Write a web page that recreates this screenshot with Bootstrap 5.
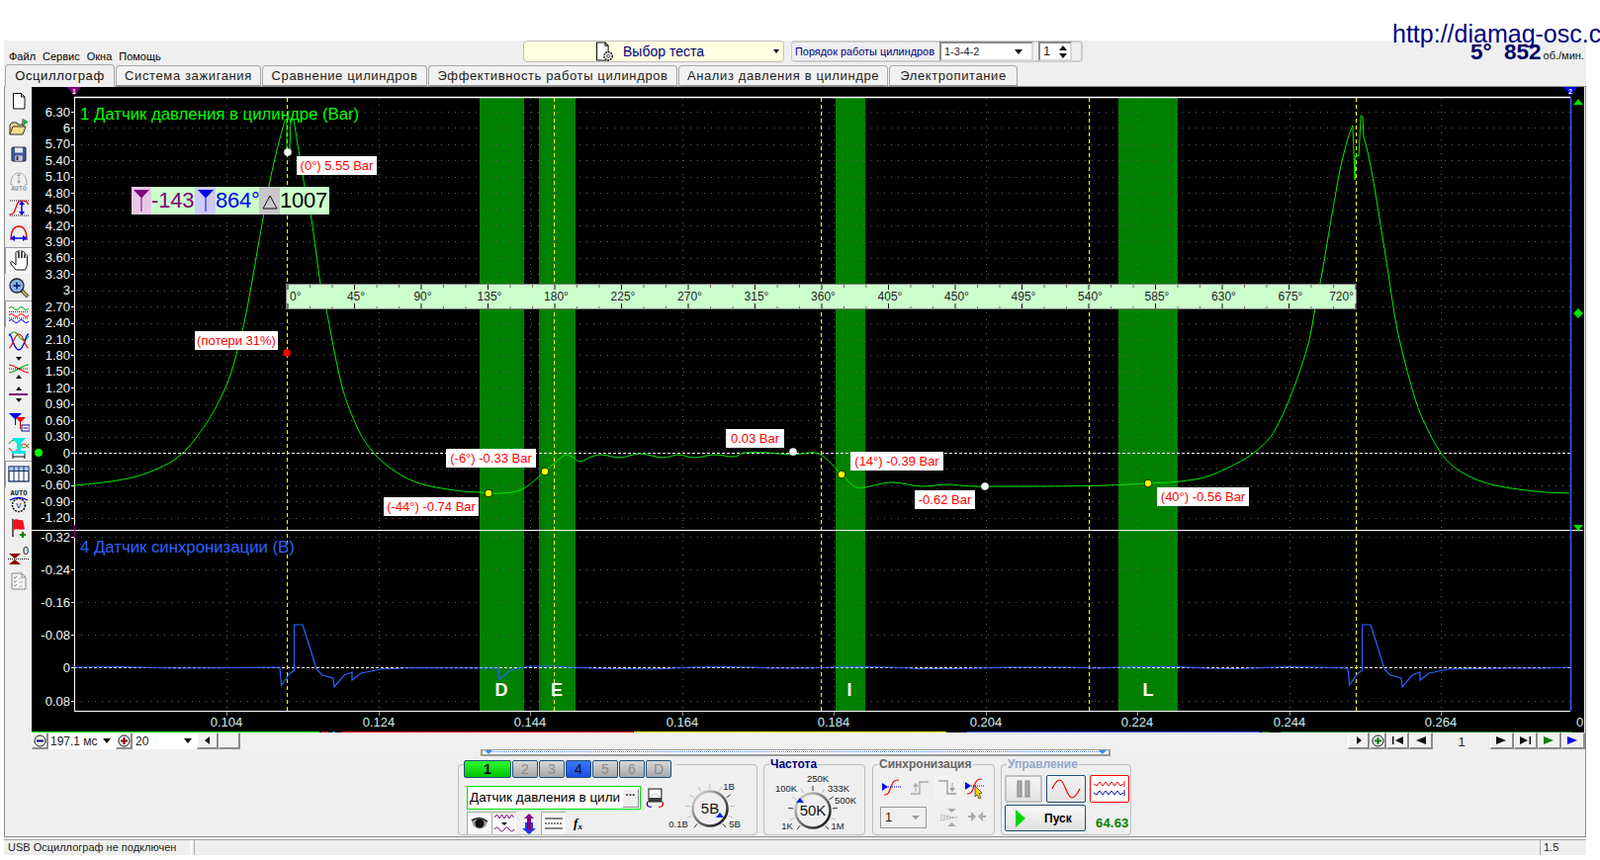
<!DOCTYPE html>
<html lang="ru">
<head>
  <meta charset="UTF-8">
  <title>Диамаг Осциллограф</title>
  <link href="https://cdn.jsdelivr.net/npm/bootstrap@5.3.0/dist/css/bootstrap.min.css" rel="stylesheet">
  <style>
    html, body { overflow: hidden; }
    body { background: #fff; font-family: "Liberation Sans", Arial, sans-serif; font-size: 11px; color: #000; width: 1618px; height: 870px; position: relative; }
    .top-strip { height: 41px; }
    .site-url { position: absolute; left: 1408px; top: 19px; font-size: 25px; line-height: 30px; color: #000080; white-space: nowrap; }
    .rpm-read { position: absolute; left: 1487px; top: 40px; color: #000066; font-weight: 700; font-size: 22.5px; line-height: 26px; white-space: nowrap; }
    .rpm-read span { font-weight: 400; font-size: 11px; color: #111; margin-left: 2px; }
    .app-wrap { width: 1600px; margin-left: 4px; background: #efefef; }

    .menu-row { height: 25px; }
    .menu-list { width: 525px; padding: 8px 0 0 5px; gap: 7px; }
    .test-pick { width: 264px; height: 22px; background: #ffffe1; border: 1px solid #c0c0c0; border-radius: 4px; color: #000080; font-size: 14px; line-height: 22px; padding-left: 70px; }
    .test-pick .drop-mark { margin-left: auto; margin-right: 4px; border-left-width: 3px; border-right-width: 3px; border-top-width: 4px; }
    .drop-mark { width: 0; height: 0; border-left: 4px solid transparent; border-right: 4px solid transparent; border-top: 5px solid #111; }
    .order-box { width: 295px; height: 22px; margin-left: 7px; border: 2px solid #ccc; border-left-width: 1px; border-radius: 4px; color: #000080; font-size: 10.9px; padding-left: 3px; gap: 5px; }
    .sunk-field { height: 20px; background: #fff; border: 2px solid #8a8a8a; border-right-color: #d8d8d8; border-bottom-color: #d8d8d8; color: #222; padding: 0 3px; }
    .order-combo { width: 95px; font-size: 11px; }
    .order-combo .drop-mark { margin-left: auto; margin-right: 6px; }
    .order-spin { width: 34px; font-size: 13px; }
    .spin-arrows { margin-left: auto; gap: 3px; }
    .spin-up, .spin-down { width: 0; height: 0; border-left: 4px solid transparent; border-right: 4px solid transparent; }
    .spin-up { border-bottom: 5px solid #111; }
    .spin-down { border-top: 5px solid #111; }

    .app-tabs.nav-tabs { height: 22px; padding-left: 1px; border-bottom: 1px solid #8f8f8f; flex-wrap: nowrap; gap: 1px; align-items: flex-end; }
    .app-tabs .nav-link { height: 21px; line-height: 20px; padding: 0; font-size: 13px; letter-spacing: .62px; color: #222; background: #f2f2f2; border: 1px solid #a8a8a8; border-bottom-color: #8f8f8f; border-radius: 4px 4px 0 0; margin: 0; text-align: center; white-space: nowrap; }
    .app-tabs .nav-link.active { height: 23px; margin-bottom: -1px; line-height: 22px; background: #efefef; color: #111; border-color: #a8a8a8 #a8a8a8 #efefef; }
    .tab-w1 { width: 111px; } .tab-w2 { width: 147px; } .tab-w3 { width: 167px; } .tab-w4 { width: 252px; } .tab-w5 { width: 212px; } .tab-w6 { width: 130px; }

    .work-frame { border: solid #8c8c8c; border-width: 0 1px 1px 1px; height: 759px; }
    .side-tools { width: 27px; height: 653px; }
    .side-btn { height: 27px; width: 27px; display: flex; align-items: center; justify-content: center; }
    .side-btn svg { display: block; }
    .side-btn.held { background: repeating-conic-gradient(#f4f4f4 0 25%, #fbfbfb 0 50%) 0 0 / 2px 2px; border-top: 1px solid #9a9a9a; border-left: 1px solid #9a9a9a; }
    .plot-area { position: relative; width: 1570px; height: 653px; background: #000; overflow: hidden; }
    .plot-area > svg { position: absolute; left: 0; top: 0; }
    .plot-tag { position: absolute; background: #fff; color: #f00; font-size: 13px; line-height: 19px; height: 19px; white-space: nowrap; text-align: center; }
    .chan-title { position: absolute; font-size: 16.75px; line-height: 20px; white-space: nowrap; }
    .chan-one { left: 49px; top: 18px; color: #00ff00; }
    .chan-four { left: 49px; top: 456px; color: #2f62ff; }
    .angle-box { position: absolute; left: 101px; top: 101px; height: 28px; display: flex; align-items: center; font-size: 22px; line-height: 28px; background: #ccffcc; border-radius: 1px; letter-spacing: -.2px; }
    .angle-box svg { display: block; }
    .seg-pin { width: 21px; height: 28px; display: flex; align-items: center; justify-content: center; }
    .seg-purple { background: #e6c8e6; width: 20px; } .seg-blue { background: #ccccff; } .seg-grey { background: #c8c8c8; }
    .seg-num { width: 44px; white-space: nowrap; }
    .seg-last { width: 50px; }
    .num-purple { color: #800080; } .num-blue { color: #0000ee; }
    .band-mark { position: absolute; color: #fff; font-weight: 700; font-size: 18px; line-height: 20px; width: 24px; text-align: center; }

    .scroll-row { height: 17px; padding-left: 27px; }
    .raise-btn { height: 17px; background: #f1f1f1; border: 1px solid; border-color: #fff #8c8c8c #8c8c8c #fff; border-width: 1px 2px 2px 1px; display: flex; align-items: center; justify-content: center; padding: 0; }
    .w-17 { width: 17px; } .w-22 { width: 22px; } .w-23 { width: 23px; } .w-24 { width: 24px; }
    .white-cell { height: 17px; background: #fff; font-size: 12px; color: #222; white-space: nowrap; }
    .white-cell .drop-mark { margin-left: auto; margin-right: 5px; }
    .cell-time { width: 68px; padding-left: 2px; }
    .cell-step { width: 65px; padding-left: 3px; }
    .check-track { flex: 1; height: 17px; background: repeating-conic-gradient(#e6e6e6 0 25%, #fafafa 0 50%) 0 0 / 2px 2px; }
    .frame-count { width: 58px; text-align: center; font-size: 13px; color: #222; }

    .slide-strip { width: 637px; height: 7px; margin-left: 481px; border: 2px solid #9a9a9a; border-width: 1px 2px 2px 2px; background: #fff; position: relative; }
    .slide-strip::before { content: ""; position: absolute; left: 8px; right: 8px; top: 1px; border-top: 1px dotted #3a7cf0; }
    .slide-strip i { position: absolute; top: 0; border-left: 4px solid transparent; border-right: 4px solid transparent; border-top: 4px solid #3a8cf0; }
    .slide-strip .end-l { left: 2px; } .slide-strip .end-r { right: 2px; }

    .bottom-groups { height: 81px; padding-left: 458px; align-items: flex-end; }
    fieldset.group-box { border: 1px solid #bdbdbd; border-radius: 4px; padding: 0; margin: 0 0 1px; min-width: 0; }
    fieldset.group-box legend { float: none; width: auto; margin: 0 0 0 5px; padding: 0 1px; font-size: 12px; line-height: 14px; height: 14px; font-weight: 700; }
    .box-chan { width: 303px; height: 76px; }
    fieldset.box-chan legend { height: 8px; line-height: 8px; margin-left: 5px; padding: 0 4px 0 0; }
    .box-freq { width: 103px; height: 79px; margin-left: 6px !important; }
    .box-sync { width: 124px; height: 79px; margin-left: 7px !important; }
    .box-ctrl { width: 132px; height: 79px; margin-left: 6px !important; }
    .lg-navy { color: #000080; } .lg-grey { color: #666; } .lg-soft { color: #8fa8cc; }

    .ch-btn.btn { width: 26px; height: 18px; padding: 0; margin-right: 1px; border-radius: 2px; border: 1px solid #1f4e79; font-size: 14px; line-height: 16px; color: #8a8a8a; background: linear-gradient(#d8d8d8, #a8a8a8); vertical-align: top; font-weight: 400; }
    .ch-btn.ch-on { width: 48px; color: #000; font-weight: 700; background: linear-gradient(#30ff30, #00c000); margin-right: 1px; }
    .ch-btn.ch-blue { color: #111; background: linear-gradient(#3a78ff, #1c4fe0); }
    .chan-left { width: 209px; padding: 18px 0 0 8px; }
    .chan-name { width: 177px; height: 24px; border: 1px solid #00e000; background: #fff; font-size: 13.5px; white-space: nowrap; overflow: hidden; padding-left: 2px; }
    .dots-btn { width: 17px; height: 19px; background: #eee; border: 1px solid; border-color: #fff #888 #888 #fff; font-size: 10px; line-height: 12px; font-weight: 700; text-align: center; margin-left: auto; margin-right: 1px; }
    .chan-icons { margin-top: 2px; }
    .small-tool { width: 25px; height: 23px; display: flex; align-items: center; justify-content: center; }
    .small-tool.held { background: #f8f8f8; border-top: 1px solid #aaa; border-left: 1px solid #aaa; }
    .fx-mark { font: italic 700 13px "Liberation Serif", serif; }
    .fx-mark sub { font-size: 9px; }
    .dial-slot { overflow: visible; flex: none; }
    .dial-volt { margin: 11px 0 0 3px; }
    .dial-freq { margin-top: 5px; }
    .sync-tool { width: 28px; height: 24px; display: flex; align-items: center; justify-content: center; }
    .sync-tool.held { background: repeating-conic-gradient(#eaeaea 0 25%, #fafafa 0 50%) 0 0 / 2px 2px; }
    .sync-top { padding: 5px 0 0 5px; }
    .sync-bottom { padding: 6px 0 0 7px; }
    .sync-combo { width: 47px; height: 22px; border: 1px solid #999; font-size: 13px; padding-left: 4px; color: #222; margin-right: 9px; }
    .sync-combo i { margin-left: auto; margin-right: 6px; width: 0; height: 0; border-left: 4px solid transparent; border-right: 4px solid transparent; border-top: 4px solid #999; }
    .ctrl-inner { padding: 4px 0 0 3px; }
    .ctrl-run-row { margin-top: 2px; }
    .ctrl-btn.btn { height: 28px; width: 40px; padding: 0; border-radius: 2px; display: flex; align-items: center; justify-content: center; background: linear-gradient(#f4f4f4, #e2e2e2); }
    .ctrl-pause.btn { width: 38px; border: 2px solid #c2c2c2; }
    .ctrl-sine.btn { border: 1px solid #1f4e79; }
    .ctrl-multi.btn { border: 1px solid #f00; background: #fff; }
    .run-btn.btn { width: 82px; height: 27px; padding: 0 0 0 9px; border: 1px solid #1f4e79; border-radius: 2px; background: linear-gradient(#fafafa, #e0e0e0); font-size: 12px; font-weight: 700; color: #000; display: flex; align-items: center; }
    .run-btn span { margin-left: 18px; }
    .run-rate { color: #008000; font-weight: 700; font-size: 13px; letter-spacing: .2px; margin-left: 10px; margin-top: 9px; }

    .status-row { height: 16px; margin-top: 2px; border-top: 1px solid #a8a8a8; font-size: 11px; line-height: 15px; color: #222; }
    .st-a { width: 190px; padding-left: 4px; border-right: 2px solid #fff; }
    .st-b { flex: 1; border-left: 1px solid #a8a8a8; margin-left: 2px; }
    .st-c { width: 47px; padding-left: 3px; border-left: 1px solid #a8a8a8; }
  </style>
</head>
<body>
  <div class="top-strip"></div>
  <div class="site-url">http://diamag-osc.c</div>
  <div class="rpm-read">5°&nbsp; 852<span>об./мин.</span></div>

  <div class="app-wrap">
    <!-- menu and test selector -->
    <div class="menu-row d-flex align-items-start">
      <div class="menu-list d-flex"><span>Файл</span><span>Сервис</span><span>Окна</span><span>Помощь</span></div>
      <div class="test-pick d-flex align-items-center">
        <svg width="26" height="21" viewBox="0 0 24 20" class="me-1"><path d="M3 1h8l3 3v14H3z" fill="#fff" stroke="#111"/><path d="M11 1v3h3" fill="none" stroke="#111"/><circle cx="14" cy="14" r="4" fill="#ddd" stroke="#222" stroke-width="1.6" stroke-dasharray="1.6 1"/><circle cx="14" cy="14" r="1.3" fill="#fff" stroke="#222" stroke-width=".7"/></svg>
        <span>Выбор теста</span><i class="drop-mark"></i>
      </div>
      <div class="order-box d-flex align-items-center">
        <span>Порядок работы цилиндров</span>
        <div class="sunk-field order-combo d-flex align-items-center">1-3-4-2<i class="drop-mark"></i></div>
        <div class="sunk-field order-spin d-flex align-items-center">1<div class="spin-arrows d-flex flex-column"><i class="spin-up"></i><i class="spin-down"></i></div></div>
      </div>
    </div>

    <ul class="nav nav-tabs app-tabs">
      <li class="nav-item"><a class="nav-link active tab-w1" href="#">Осциллограф</a></li>
      <li class="nav-item"><a class="nav-link tab-w2" href="#">Система зажигания</a></li>
      <li class="nav-item"><a class="nav-link tab-w3" href="#">Сравнение цилиндров</a></li>
      <li class="nav-item"><a class="nav-link tab-w4" href="#">Эффективность работы цилиндров</a></li>
      <li class="nav-item"><a class="nav-link tab-w5" href="#">Анализ давления в цилиндре</a></li>
      <li class="nav-item"><a class="nav-link tab-w6" href="#">Электропитание</a></li>
    </ul>

    <div class="work-frame">
      <div class="d-flex">
        <div class="side-tools d-flex flex-column">
          <div class="side-btn"><svg width="20" height="20" viewBox="0 0 20 20"><path d="M4.5 2.5h8l3.5 3.500v12h-11.500z" fill="#fff" stroke="#111"/><path d="M12.500 2.500v3.500h3.500" fill="none" stroke="#111"/></svg></div>
          <div class="side-btn"><svg width="20" height="20" viewBox="0 0 20 20"><path d="M1 17V7l2-2h5l1 2h6v2" fill="#e8d690" stroke="#333"/><path d="M1 17l3-8h13l-3 8z" fill="#f2df8a" stroke="#333"/><path d="M14 1v7" stroke="#333"/><path d="M14.500 1l5 3.500-5 3.500z" fill="#10b040"/></svg></div>
          <div class="side-btn"><svg width="20" height="20" viewBox="0 0 20 20"><rect x="3" y="3" width="14" height="14" rx="1" fill="#3c5aa8" stroke="#223"/><rect x="6" y="3.500" width="8" height="5" fill="#e8e8e8"/><rect x="6" y="11" width="8" height="6" fill="#c8c8d8" stroke="#445" stroke-width=".5"/><rect x="7.500" y="12" width="2" height="4" fill="#334"/></svg></div>
          <div class="side-btn"><svg width="22" height="22" viewBox="0 0 22 22"><path d="M3 14C3 6 7 3 11 3s8 3 8 11" fill="none" stroke="#aaa"/><path d="M2 14l3 1m15-1l-3 1" stroke="#aaa"/><path d="M11 4v9" stroke="#aaa"/><path d="M9 6l2-3 2 3zM9 11l2 3 2-3z" fill="#aaa"/><text x="11" y="21" font-size="6.500" font-weight="700" text-anchor="middle" fill="#999" font-family="Liberation Mono, monospace">AUTO</text></svg></div>
          <div class="side-btn"><svg width="22" height="22" viewBox="0 0 22 22"><path d="M2 4h19M2 19h19" stroke="#111" stroke-dasharray="1 1"/><path d="M1 18c5 0 5-1 7-7s3-7 6-7c4 0 5 1 7 4" fill="none" stroke="#e00" stroke-width="1.200"/><path d="M14 7v9" stroke="#00e" stroke-width="1.500"/><path d="M11 8l3-4 3 4zM11 15l3 4 3-4z" fill="#00e"/></svg></div>
          <div class="side-btn"><svg width="22" height="22" viewBox="0 0 22 22"><path d="M3 17C3 8 6 3 11 3s8 5 8 14" fill="none" stroke="#e00" stroke-width="1.300"/><path d="M4 15h14" stroke="#00e" stroke-width="1.500"/><path d="M7 12l-5 3 5 3zM15 12l5 3-5 3z" fill="#00e"/></svg></div>
          <div class="side-btn held"><svg width="22" height="22" viewBox="0 0 22 22"><path d="M8 21l-5-6c-1-2 1-3 2-2l3 3V4c0-2 3-2 3 0v5-7c0-2 3-2 3 0v7-5c0-2 3-2 3 0v5-2c0-2 2.500-2 2.500 0v7c0 3-1 5-2 7z" transform="translate(0 -1)" fill="#fff" stroke="#111" stroke-width="1"/></svg></div>
          <div class="side-btn"><svg width="22" height="22" viewBox="0 0 22 22"><path d="M13 13l7 7" stroke="#222" stroke-width="3.500"/><path d="M13.500 13.500l6 6" stroke="#d8b050" stroke-width="2"/><circle cx="9" cy="9" r="7" fill="#8ab4e8" stroke="#223" stroke-width="1.300"/><path d="M5.500 9h7M9 5.500v7" stroke="#0a2a80" stroke-width="1.800"/></svg></div>
          <div class="side-btn held"><svg width="22" height="20" viewBox="0 0 22 20"><path d="M1 4q2.500-3 5 0t5 0 5 0 5 0" fill="none" stroke="#0a0" stroke-width="1.100"/><path d="M1 11q2.500-3 5 0t5 0 5 0 5 0" fill="none" stroke="#e00" stroke-width="1.100"/><path d="M1 17q2.500-3 5 0t5 0 5 0 5 0" fill="none" stroke="#00e" stroke-width="1.100"/><path d="M1 7.500h20M1 14h20" stroke="#111" stroke-dasharray="1 1"/></svg></div>
          <div class="side-btn"><svg width="22" height="22" viewBox="0 0 22 22"><path d="M1 6q5-8 10 0t10 0" fill="none" stroke="#0a0" stroke-width="1.200"/><path d="M1 4c4 0 4 16 10 16S17 4 21 4" fill="none" stroke="#00e" stroke-width="1.300"/><path d="M1 18C5 18 6 4 11 4s6 14 10 14" fill="none" stroke="#e00" stroke-width="1.200"/></svg></div>
          <div class="side-btn"><svg width="22" height="24" viewBox="0 0 22 24"><path d="M1 9c6 0 14 8 20 8" fill="none" stroke="#e00" stroke-width="1.100"/><path d="M1 17c6 0 14-8 20-8" fill="none" stroke="#0a0" stroke-width="1.100"/><path d="M1 13h20" stroke="#111" stroke-dasharray="1 1"/><path d="M8 1h6l-3 4zM8 23h6l-3-4z" fill="#111"/></svg></div>
          <div class="side-btn"><svg width="22" height="22" viewBox="0 0 22 22"><path d="M8 7l3-4 3 4zM8 15l3 4 3-4z" fill="#111"/><rect x="1" y="10" width="19" height="2" fill="#800080"/></svg></div>
          <div class="side-btn"><svg width="22" height="22" viewBox="0 0 22 22"><path d="M1 3h13L8 9v6H7V9z" fill="#00e"/><path d="M8 7h10l-5 5v7h-1v-7z" fill="#e00"/><rect x="14" y="15" width="8" height="6" fill="#fff" stroke="#00a"/><path d="M15.500 18h5" stroke="#00a"/></svg></div>
          <div class="side-btn"><svg width="22" height="24" viewBox="0 0 22 24"><path d="M1 8q5-8 10 0t10 0" fill="none" stroke="#0a0"/><path d="M1 12q5 8 10 0t10 0" fill="none" stroke="#e00"/><path d="M4 2h14l-5 6v7h5v3H4v-3h5V8z" fill="#00e8e8"/><path d="M5 21h12M5 18v5m12-5v5" stroke="#111" fill="none"/></svg></div>
          <div class="side-btn held"><svg width="22" height="18" viewBox="0 0 22 18"><rect x="1" y="1" width="20" height="15" fill="#fff" stroke="#1a2a60" stroke-width="1.300"/><rect x="1.500" y="1.500" width="19" height="4" fill="#a8c8f0"/><path d="M1 5.500h20M6 5.500v10.500M11 5.500v10.500M16 5.500v10.500M6 1v4M11 1v4M16 1v4" stroke="#1a2a60"/></svg></div>
          <div class="side-btn"><svg width="22" height="24" viewBox="0 0 22 24"><text x="11" y="6" font-size="7" font-weight="700" text-anchor="middle" fill="#111" font-family="Liberation Mono, monospace">AUTO</text><path d="M2 11q9-5 18 0" fill="none" stroke="#00e" stroke-width="1.300"/><circle cx="11" cy="16" r="6.500" fill="#eee" stroke="#111" stroke-width="1.500" stroke-dasharray="2 1"/><text x="11" y="19" font-size="8" text-anchor="middle" fill="#00a">V</text></svg></div>
          <div class="side-btn"><svg width="22" height="22" viewBox="0 0 22 22"><path d="M5 2v18" stroke="#111" stroke-width="1.300"/><path d="M6 3c3-2 5 1 9 0l2 9c-4 2-7-1-11 1z" fill="#f01020"/><path d="M15 15v6M12 18h6" stroke="#0a8000" stroke-width="2.200"/></svg></div>
          <div class="side-btn"><svg width="24" height="24" viewBox="0 0 24 24"><path d="M2 11h12l-6 5zM2 22h12l-6-5z" fill="#8a0000"/><path d="M1 16.500h22" stroke="#111" stroke-dasharray="1 1"/><text x="19" y="12" font-size="11" text-anchor="middle" fill="#111" font-family="Liberation Sans, sans-serif">0</text></svg></div>
          <div class="side-btn"><svg width="20" height="20" viewBox="0 0 20 20"><path d="M3 2h10l4 4v12H3z" fill="#f4f4f4" stroke="#888"/><path d="M13 2v4h4" fill="none" stroke="#888"/><path d="M5 6l1 1 2-2M5 10l1 1 2-2M5 14l1 1 2-2" fill="none" stroke="#888"/><path d="M10 7h4M10 11h4M10 15h4" stroke="#bbb"/></svg></div>
        </div>
        <div class="plot-area" id="plot">
          <svg id="scope" width="1570" height="653" viewBox="32 88 1570 653" xmlns="http://www.w3.org/2000/svg" font-family="Liberation Sans, sans-serif"></svg>
          <div class="chan-title chan-one">1 Датчик давления в цилиндре (Bar)</div>
          <div class="chan-title chan-four">4 Датчик синхронизации (В)</div>
          <div class="angle-box">
            <div class="seg-pin seg-purple"><svg width="18" height="24" viewBox="0 0 18 24"><path d="M1 1h16L9.500 9v14h-1V9z" fill="#800080"/></svg></div>
            <div class="seg-num num-purple">-143</div>
            <div class="seg-pin seg-blue"><svg width="18" height="24" viewBox="0 0 18 24"><path d="M1 1h16L9.500 9v14h-1V9z" fill="#0000ee"/></svg></div>
            <div class="seg-num num-blue">864°</div>
            <div class="seg-pin seg-grey"><svg width="16" height="20" viewBox="0 0 16 20"><path d="M8 5L15 18H1z" fill="none" stroke="#111"/></svg></div>
            <div class="seg-num seg-last">1007</div>
          </div>
        </div>
      </div>

      <div class="scroll-row d-flex">
        <button class="raise-btn w-17"><svg width="13" height="13" viewBox="0 0 13 13"><circle cx="6.500" cy="6.500" r="5.500" fill="#eee" stroke="#111"/><path d="M3 6.500h7" stroke="#00008b" stroke-width="2"/></svg></button>
        <div class="white-cell cell-time d-flex align-items-center">197.1 мс<i class="drop-mark"></i></div>
        <button class="raise-btn w-17"><svg width="13" height="13" viewBox="0 0 13 13"><circle cx="6.500" cy="6.500" r="5.500" fill="#eee" stroke="#111"/><path d="M3 6.500h7M6.500 3v7" stroke="#8b0000" stroke-width="2"/></svg></button>
        <div class="white-cell cell-step d-flex align-items-center">20<i class="drop-mark"></i></div>
        <button class="raise-btn w-22"><svg width="6" height="8" viewBox="0 0 6 8"><path d="M5 0v8L0 4z" fill="#111"/></svg></button>
        <div class="raise-btn w-22"></div>
        <div class="check-track"></div>
        <button class="raise-btn w-22"><svg width="6" height="8" viewBox="0 0 6 8"><path d="M1 0v8l5-4z" fill="#111"/></svg></button>
        <button class="raise-btn w-17"><svg width="13" height="13" viewBox="0 0 13 13"><circle cx="6.500" cy="6.500" r="5.500" fill="#eee" stroke="#111"/><path d="M3 6.500h7M6.500 3v7" stroke="#008000" stroke-width="2"/></svg></button>
        <button class="raise-btn w-23"><svg width="11" height="8" viewBox="0 0 11 8"><path d="M0 0h1.500v8H0zM11 0v8L3 4z" fill="#111"/></svg></button>
        <button class="raise-btn w-24"><svg width="11" height="8" viewBox="0 0 11 8"><path d="M11 0v8L1 4z" fill="#111"/></svg></button>
        <div class="frame-count">1</div>
        <button class="raise-btn w-24"><svg width="11" height="8" viewBox="0 0 11 8"><path d="M0 0v8l10-4z" fill="#111"/></svg></button>
        <button class="raise-btn w-24"><svg width="11" height="8" viewBox="0 0 11 8"><path d="M0 0v8l8-4zM9.500 0H11v8H9.500z" fill="#111"/></svg></button>
        <button class="raise-btn w-24"><svg width="11" height="8" viewBox="0 0 11 8"><path d="M0 0v8l10-4z" fill="#008000"/></svg></button>
        <button class="raise-btn w-24"><svg width="11" height="8" viewBox="0 0 11 8"><path d="M0 0v8l10-4z" fill="#0000ee"/></svg></button>
      </div>

      <div class="slide-strip"><i class="end-l"></i><i class="end-r"></i></div>

      <div class="bottom-groups d-flex">
        <fieldset class="group-box box-chan">
          <legend>
            <button class="btn ch-btn ch-on">1</button><button class="btn ch-btn">2</button><button class="btn ch-btn">3</button><button class="btn ch-btn ch-blue">4</button><button class="btn ch-btn">5</button><button class="btn ch-btn">6</button><button class="btn ch-btn">D</button>
          </legend>
          <div class="d-flex">
            <div class="chan-left">
              <div class="d-flex align-items-center">
                <div class="chan-name d-flex align-items-center"><span>Датчик давления в цили</span><span class="dots-btn">···</span></div>
                <svg class="ms-1" width="21" height="21" viewBox="0 0 21 21"><rect x="4" y="1" width="13" height="13" fill="#fff" stroke="#111"/><path d="M6 9q4.500-6 9 0" fill="none" stroke="#666" stroke-dasharray="1 1"/><rect x="4" y="10" width="13" height="4" fill="#3a3a3a"/><path d="M3 14c-2 4 1 6 4 5" fill="none" stroke="#00a" stroke-width="1.200"/><path d="M18 14c2 4-1 6-4 5" fill="none" stroke="#d00" stroke-width="1.200"/></svg>
              </div>
              <div class="d-flex chan-icons">
                <div class="small-tool held"><svg width="20" height="14" viewBox="0 0 20 14"><path d="M2 5q8-6 16 0l-2 5q-6 5-12 0z" fill="#999"/><circle cx="10" cy="7" r="4.500" fill="#111"/><path d="M2 4q8-5 16 1" fill="none" stroke="#222" stroke-width="1.500"/></svg></div>
                <div class="small-tool held"><svg width="22" height="20" viewBox="0 0 22 20"><path d="M1 4l2.500-3 2.500 4 2.500-4 2.500 4 2.500-4 2.500 4 2.500-4 2 3" fill="none" stroke="#800080"/><path d="M1 16q2.500-4 5 0t5 0 5 0 5 0" fill="none" stroke="#800080"/><path d="M8 9h6l-3 3z" fill="#111"/></svg></div>
                <div class="small-tool"><svg width="18" height="22" viewBox="0 0 18 22"><path d="M9 1l5 5h-3v15H7V6H4z" fill="#800080"/><path d="M5 10v6H2l7 6 7-6h-3v-6h-2v8H7v-8z" fill="#1a3cf0"/></svg></div>
                <div class="small-tool held"><svg width="20" height="14" viewBox="0 0 20 14"><path d="M1 2h18M1 12h18" stroke="#111" stroke-width="1.200"/><path d="M1 7h18" stroke="#111" stroke-dasharray="2 1" stroke-width="1.200"/></svg></div>
                <div class="small-tool"><span class="fx-mark">f<sub>x</sub></span></div>
              </div>
            </div>
            <svg class="dial-slot dial-volt" width="82" height="56" data-lab="1В:61:8,0.1В:10:46,5В:67:46" data-val="5В" data-cx="42" data-cy="30" data-mark="52,37"></svg>
          </div>
        </fieldset>

        <fieldset class="group-box box-freq">
          <legend class="lg-navy">Частота</legend>
          <svg class="dial-slot dial-freq" width="101" height="56" data-lab="100K:22:13,250K:54:3,333K:75:13,500K:82:25,1K:23:51,1M:74:51" data-val="50K" data-cx="49" data-cy="35" data-mark="36,25"></svg>
        </fieldset>

        <fieldset class="group-box box-sync">
          <legend class="lg-grey">Синхронизация</legend>
          <div class="sync-top d-flex">
            <div class="sync-tool"><svg width="22" height="18" viewBox="0 0 22 18"><path d="M3 16c5 0 5-3 7-8s3-7 8-7" fill="none" stroke="#e00" stroke-width="1.200"/><path d="M5 8h15" stroke="#00e" stroke-dasharray="1 1"/><path d="M1 4l6 4-6 4z" fill="#00e"/></svg></div>
            <div class="sync-tool"><svg width="20" height="16" viewBox="0 0 20 16"><path d="M1 14h9V2h9" fill="none" stroke="#aaa" stroke-width="1.300"/><path d="M6 5v7" stroke="#aaa"/><path d="M3 7l3-4 3 4z" fill="#aaa"/></svg></div>
            <div class="sync-tool held"><svg width="20" height="18" viewBox="0 0 20 18"><path d="M1 2h9v13h9" fill="none" stroke="#999" stroke-width="1.300"/><path d="M15 4v7" stroke="#999"/><path d="M12 9l3 4 3-4z" fill="#999"/></svg></div>
            <div class="sync-tool"><svg width="22" height="22" viewBox="0 0 22 22"><path d="M3 17c5 0 5-3 7-8s3-7 8-7" fill="none" stroke="#e00" stroke-width="1.200"/><path d="M5 9h15" stroke="#00e" stroke-dasharray="1 1"/><path d="M1 5l6 4-6 4z" fill="#00e"/><path d="M11 9l7 7-3 1 2 4-2 1-2-4-2 2z" fill="#fc0" stroke="#111" stroke-width=".6"/></svg></div>
          </div>
          <div class="sync-bottom d-flex align-items-center">
            <div class="sync-combo d-flex align-items-center">1<i></i></div>
            <div class="sync-tool"><svg width="20" height="20" viewBox="0 0 20 20"><path d="M1 7l14 3-14 3M1 10h18" fill="none" stroke="#aaa" stroke-dasharray="2 1"/><path d="M8 1h9l-4.500 4zM8 19h9l-4.500-4z" fill="#aaa"/></svg></div>
            <div class="sync-tool"><svg width="20" height="14" viewBox="0 0 20 14"><path d="M1 6h7M12 6h7" stroke="#aaa" stroke-width="2"/><path d="M9 6L4 1v10zM11 6l5-5v10z" fill="#aaa"/></svg></div>
          </div>
        </fieldset>

        <fieldset class="group-box box-ctrl">
          <legend class="lg-soft">Управление</legend>
          <div class="ctrl-inner">
            <div class="d-flex gap-1">
              <button class="btn ctrl-btn ctrl-pause"><svg width="14" height="18" viewBox="0 0 14 18"><rect x="1" y="1" width="4" height="16" fill="#aaa" stroke="#888"/><rect x="9" y="1" width="4" height="16" fill="#aaa" stroke="#888"/></svg></button>
              <button class="btn ctrl-btn ctrl-sine"><svg width="30" height="22" viewBox="0 0 30 22"><path d="M1 11C4 4 7 2 9 2c4 0 7 18 12 18 3 0 5-3 8-9" fill="none" stroke="#e00" stroke-width="1.200"/></svg></button>
              <button class="btn ctrl-btn ctrl-multi"><svg width="34" height="22" viewBox="0 0 34 22"><path d="M1 6l3 2 3-4 3 4 3-4 3 4 3-4 3 4 3-4 3 4 3-2M32 3v6" fill="none" stroke="#d00"/><path d="M1 15l3 2 3-4 3 4 3-4 3 4 3-4 3 4 3-4 3 4 3-2M32 12v6" fill="none" stroke="#00a"/></svg></button>
            </div>
            <div class="d-flex ctrl-run-row">
              <button class="btn run-btn"><svg width="12" height="20" viewBox="0 0 12 20"><path d="M1 1v18l10-9z" fill="#00d800"/></svg><span>Пуск</span></button>
              <div class="run-rate">64.63</div>
            </div>
          </div>
        </fieldset>
      </div>
    </div>

    <div class="status-row d-flex">
      <div class="st-a">USB Осциллограф не подключен</div>
      <div class="st-b"></div>
      <div class="st-c">1.5</div>
    </div>
  </div>

  <script>
    const svgNs = 'http://www.w3.org/2000/svg';
    const scope = document.getElementById('scope');
    const plot = document.getElementById('plot');

    function add(parent, name, attrs, txt) {
      const el = document.createElementNS(svgNs, name);
      for (const k in attrs) el.setAttribute(k, attrs[k]);
      if (txt !== undefined) el.textContent = txt;
      parent.appendChild(el);
      return el;
    }
    function hline(x1, x2, y, stroke, dash, w) {
      add(scope, 'line', { x1, x2, y1: y + .5, y2: y + .5, stroke, 'stroke-width': w || 1, 'stroke-dasharray': dash || 'none' });
    }
    function vline(x, y1, y2, stroke, dash, w) {
      add(scope, 'line', { x1: x + .5, x2: x + .5, y1, y2, stroke, 'stroke-width': w || 1, 'stroke-dasharray': dash || 'none' });
    }
    // catmull-rom through the traced points
    function smoothPath(p) {
      let d = `M${p[0][0]} ${p[0][1]}`;
      for (let i = 0; i < p.length - 1; i++) {
        const a = p[i - 1] || p[i], b = p[i], c = p[i + 1], e = p[i + 2] || c;
        d += `C${b[0] + (c[0] - a[0]) / 6} ${b[1] + (c[1] - a[1]) / 6} ${c[0] - (e[0] - b[0]) / 6} ${c[1] - (e[1] - b[1]) / 6} ${c[0]} ${c[1]}`;
      }
      return d;
    }

    // green bands
    [[485, 45], [545, 37], [845, 30], [1131, 60]].forEach(b => add(scope, 'rect', { x: b[0], y: 99, width: b[1], height: 620, fill: '#008000' }));

    // grid
    const yTop = [];
    for (let i = 0; i <= 25; i++) {
      const v = 6.3 - i * .3, y = 113 + i * 16.43;
      if (Math.abs(v) > .01) hline(75, 1588, Math.round(y), '#5c5c5c', '1 6');
      let s = Math.abs(v) < .01 ? '0' : v.toFixed(2);
      if (s === '6.00') s = '6';
      if (s === '3.00') s = '3';
      yTop.push([s, y]);
    }
    const yLow = [['-0.32', 543], ['-0.24', 576], ['-0.16', 609], ['-0.08', 642], ['0', 675], ['0.08', 709]];
    yLow.forEach(l => { if (l[0] !== '0') hline(75, 1588, l[1], '#5c5c5c', '1 6'); });
    const xMarks = [];
    for (let k = 0; k < 9; k++) {
      const x = Math.round(229 + k * 153.5);
      vline(x, 99, 719, '#5c5c5c', '1 6');
      vline(x, 719, 724, '#999');
      xMarks.push([(0.104 + k * .02).toFixed(3), x]);
    }
    yTop.concat(yLow).forEach(l => {
      add(scope, 'text', { x: 71, y: l[1] + 4.500, 'font-size': 13, fill: '#f2f6fa', 'text-anchor': 'end' }, l[0]);
      hline(72, 75, Math.round(l[1]), '#fff');
    });
    xMarks.forEach(m => add(scope, 'text', { x: m[1], y: 735, 'font-size': 13, fill: '#cfeeee', 'text-anchor': 'middle' }, m[0]));
    add(scope, 'text', { x: 1594, y: 735, 'font-size': 13, fill: '#cfeeee' }, '0');

    // zero lines
    hline(75, 1588, 458, '#fff', '3 2');
    hline(75, 1588, 675, '#fff', '3 2');

    // crank markers
    [290, 560, 830, 1101, 1371].forEach(x => vline(x, 99, 719, '#ffff00', '4 3'));

    // frame
    hline(75, 1588, 98, '#fff', '', 1.500);
    hline(75, 1588, 719, '#fff');
    hline(32, 1601, 536, '#fff');
    vline(75, 98, 719, '#fff');
    vline(1588, 98, 719, '#3a5cff', '', 1.500);
    vline(75, 531, 544, '#800080');
    add(scope, 'path', { d: 'M68 88h14l-7 9z', fill: '#800080' });
    add(scope, 'text', { x: 75, y: 95, 'font-size': 7, fill: '#fff', 'text-anchor': 'middle', 'font-weight': 700 }, '1');
    add(scope, 'path', { d: 'M1581 88h14l-7 9z', fill: '#0000ff' });
    add(scope, 'text', { x: 1588, y: 95, 'font-size': 7, fill: '#fff', 'text-anchor': 'middle', 'font-weight': 700 }, '2');
    add(scope, 'path', { d: 'M1591 106l5-6 5 6z', fill: '#00e000' });
    add(scope, 'path', { d: 'M1596 312l5 5-5 5-5-5z', fill: '#00e000' });
    add(scope, 'path', { d: 'M1591 531h10l-5 6z', fill: '#00e000' });
    add(scope, 'circle', { cx: 39, cy: 458, r: 4, fill: '#00ff00' });

    // bottom colour strip
    [[32, 323, '#00ff00'], [325, 332, '#f00'], [336, 339, '#3a7cff'], [345, 640, '#f00'], [641, 957, '#ffff00'], [978, 1273, '#2f62ff'], [1276, 1283, '#008000'], [1295, 1590, '#008000']]
      .forEach(s => add(scope, 'rect', { x: s[0], y: 740, width: s[1] - s[0], height: 1, fill: s[2] }));

    // pressure trace, traced from the picture
    const greenParts = [
      [[75, 491], [105, 488], [134, 483], [155, 476], [175, 466], [190, 453], [201, 439], [215, 418], [232, 382], [245, 335], [253, 295], [263, 238], [272, 188], [280, 152], [288, 122]],
      [[297, 121], [308, 188], [315, 222], [324, 287], [330, 313], [338, 355], [347, 395], [358, 425], [370, 448], [390, 470], [421, 488], [460, 496], [485, 498], [505, 499], [528, 495], [551, 477], [570, 461], [578, 462], [587, 467], [598, 462], [609, 460], [627, 463], [647, 459], [670, 463], [686, 460], [702, 463], [722, 460], [742, 462], [753, 458], [777, 458], [801, 460], [828, 459], [851, 480], [864, 492], [874, 493], [902, 488], [931, 492], [959, 490], [990, 492], [1100, 491.500], [1161, 489], [1193, 487], [1221, 482], [1252, 468], [1268, 458], [1284, 443], [1296, 422], [1310, 388], [1323, 348], [1330, 312], [1337, 276], [1343, 240], [1350, 200], [1355, 172], [1363, 140], [1368, 127]],
      [[1379, 138], [1384, 158], [1390, 190], [1397, 233], [1404, 277], [1410, 317], [1416, 347], [1426, 386], [1437, 420], [1457, 458], [1477, 477], [1508, 490], [1552, 497], [1587, 499]]
    ];
    greenParts.forEach(p => add(scope, 'path', { d: smoothPath(p), fill: 'none', stroke: '#00f000', 'stroke-width': 1 }));
    ['288,122 290,120 290,152 293,152 294,122 297,121', '1368,127 1369,153 1370,182 1371,157 1374,158 1375,140 1376,117 1378,118 1379,138'].forEach(points =>
      add(scope, 'polyline', { points, fill: 'none', stroke: '#00f000', 'stroke-width': 1 }));

    // sync trace
    const pulse = [[-2, 1], [-.4, 18], [7.500, 7], [12.600, 3], [12.600, -43], [21, -43], [29, -18], [35, 2], [41, 8], [52, 11], [53, 20], [63, 8], [71, 5], [71, 13], [80, 6], [100, 2]];
    const mid = '420,675.500 480,676 500,676 504,676 505,687 516,678 530,675 540,674 560,674 575,675 600,676 630,676.500 660,677 680,676 700,675 730,674.500 760,675 780,676 820,676 840,675 870,674.500 900,675 930,676.500 960,676.500 990,676 1020,675 1050,675 1080,675 1110,676 1130,675 1160,674.500 1190,674.500 1220,676 1250,676.500 1280,675.500 1300,674.500 1330,675 1362,676';
    const pulseAt = x0 => pulse.map(p => `${x0 + p[0]},${675 + p[1]}`).join(' ');
    add(scope, 'polyline', { points: `75,675 120,674.500 180,676 240,675.500 283,675 ${pulseAt(285)} ${mid} ${pulseAt(1365)} 1520,676 1560,676 1587,675`, fill: 'none', stroke: '#2f62ff', 'stroke-width': 1.200 });

    // angle ruler
    add(scope, 'rect', { x: 289.500, y: 287.500, width: 1082, height: 25, fill: '#ccffcc', stroke: '#808080' });
    for (let deg = 0; deg <= 720; deg += 15) {
      const x = 291 + deg * 1.5, big = deg % 45 === 0;
      add(scope, 'line', { x1: x, x2: x, y1: 288, y2: big ? 293 : 291, stroke: big ? '#111' : '#7a6a50' });
      add(scope, 'line', { x1: x, x2: x, y1: big ? 307 : 310, y2: 312, stroke: big ? '#111' : '#7a6a50' });
      if (big) {
        const anchor = deg === 0 ? 'start' : deg === 720 ? 'end' : 'middle';
        add(scope, 'text', { x: deg === 720 ? x - 2 : deg === 0 ? x + 2 : x + 1.500, y: 304, 'font-size': 12, fill: '#222', 'text-anchor': anchor }, deg + '°');
      }
    }

    // measuring points
    [[291, 154, '#fff'], [290, 357, '#f00'], [494, 499, '#ff0'], [551, 477, '#ff0'], [851, 480, '#ff0'], [1161, 489, '#ff0'], [802, 457, '#fff'], [996, 492, '#fff']]
      .forEach(d => add(scope, 'circle', { cx: d[0], cy: d[1], r: 3.800, fill: d[2], stroke: '#000', 'stroke-width': d[2] === '#ff0' ? .8 : 0 }));

    // tags over the traces: [text, left, top, width]
    [['(0°) 5.55 Bar', 300, 158, 81], ['(потери 31%)', 197, 335, 84], ['(-6°) -0.33 Bar', 451, 454, 91], ['(-44°) -0.74 Bar', 388, 503, 96],
     ['0.03 Bar', 734, 434, 59], ['(14°) -0.39 Bar', 860, 457, 94], ['-0.62 Bar', 925, 496, 61], ['(40°) -0.56 Bar', 1170, 493, 93]].forEach(t => {
      const tag = document.createElement('div');
      tag.className = 'plot-tag';
      tag.textContent = t[0];
      tag.style.left = (t[1] - 32) + 'px';
      tag.style.top = (t[2] - 88) + 'px';
      tag.style.width = t[3] + 'px';
      plot.appendChild(tag);
    });
    [['D', 507], ['E', 563], ['I', 859], ['L', 1161]].forEach(m => {
      const mark = document.createElement('div');
      mark.className = 'band-mark';
      mark.textContent = m[0];
      mark.style.left = (m[1] - 12 - 32) + 'px';
      mark.style.top = (688 - 88) + 'px';
      plot.appendChild(mark);
    });

    // dials
    document.querySelectorAll('.dial-slot').forEach((s, n) => {
      const cx = +s.dataset.cx, cy = +s.dataset.cy, r = 17.500;
      const defs = add(s, 'defs', {});
      const grad = add(defs, 'linearGradient', { id: 'ring' + n, x1: 0, y1: 0, x2: 1, y2: 1 });
      add(grad, 'stop', { offset: '0', 'stop-color': '#e6e6e6' });
      add(grad, 'stop', { offset: '1', 'stop-color': '#000' });
      for (let a = -140; a <= 140; a += 28) {
        const t = a * Math.PI / 180, sx = Math.sin(t), cyy = -Math.cos(t);
        const dark = a === -140 || a === 140 || (n === 0 ? a === 56 : a === -84 || a === 0 || a === 56 || a === 84);
        add(s, 'line', { x1: cx + sx * 20, y1: cy + cyy * 20, x2: cx + sx * 25, y2: cy + cyy * 25, stroke: dark ? '#333' : '#bbb' });
      }
      add(s, 'circle', { cx, cy, r, fill: '#efefef', stroke: `url(#ring${n})`, 'stroke-width': 2.500 });
      add(s, 'text', { x: cx, y: cy + 5, 'font-size': 15, fill: '#111', 'text-anchor': 'middle' }, s.dataset.val);
      const mk = s.dataset.mark.split(',').map(Number);
      add(s, 'path', { d: `M${mk[0] - 4} ${mk[1] + 2}l4-5 4 5z`, fill: '#0a1ee0' });
      s.dataset.lab.split(',').forEach(l => {
        const p = l.split(':');
        add(s, 'text', { x: p[1], y: +p[2] + 3, 'font-size': 9.500, fill: '#222', 'text-anchor': 'middle' }, p[0]);
      });
    });
  </script>
  <script src="https://cdn.jsdelivr.net/npm/bootstrap@5.3.0/dist/js/bootstrap.bundle.min.js"></script>
</body>
</html>
